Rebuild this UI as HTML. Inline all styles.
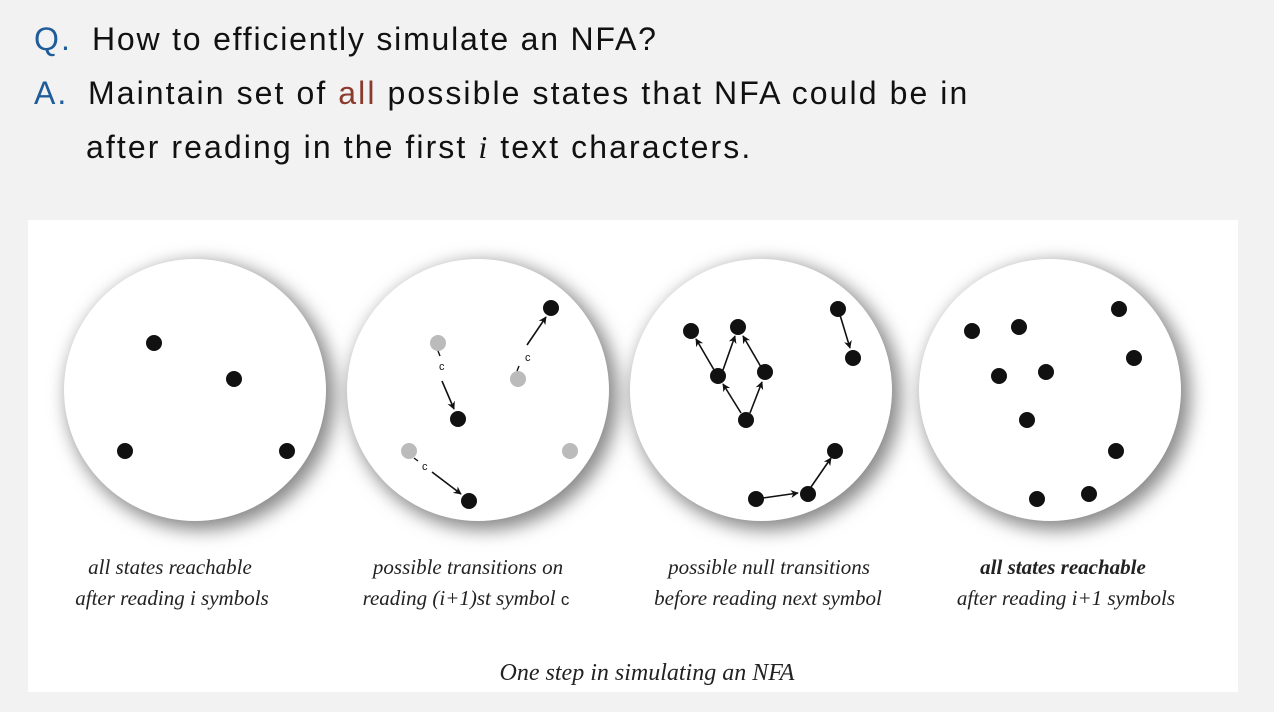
<!DOCTYPE html>
<html><head><style>
body{margin:0;width:1274px;height:712px;background:#f2f2f2;overflow:hidden;position:relative;font-family:"Liberation Sans",sans-serif}
.t{position:absolute;font-size:32px;color:#111;white-space:nowrap;letter-spacing:2.08px}
.b{color:#1f5c99}
</style></head><body>
<div class="t b" style="left:34px;top:21px">Q.</div>
<div class="t" style="left:92px;top:21px;letter-spacing:1.8px">How to efficiently simulate an NFA?</div>
<div class="t b" style="left:34px;top:75px">A.</div>
<div class="t" style="left:88px;top:75px">Maintain set of <span style="color:#8b3a2e">all</span> possible states that NFA could be in</div>
<div class="t" style="left:86px;top:129px">after reading in the first <i style="font-family:'Liberation Serif',serif">i</i> text characters.</div>
<svg style="position:absolute;left:0;top:0" width="1274" height="712">
<defs>
<filter id="bl" x="-30%" y="-30%" width="160%" height="160%"><feGaussianBlur stdDeviation="9"/></filter>
<marker id="a" viewBox="0 0 10 10" refX="9" refY="5" markerWidth="5" markerHeight="5" orient="auto"><path d="M0,0L10,5L0,10L3,5z" fill="#111"/></marker>
</defs>
<rect x="28" y="220" width="1210" height="472" fill="#fff"/>
<g fill="#888" filter="url(#bl)">
<circle cx="201" cy="396" r="134"/><circle cx="484" cy="396" r="134"/><circle cx="767" cy="396" r="134"/><circle cx="1056" cy="396" r="134"/>
</g>
<g fill="#fff">
<circle cx="195" cy="390" r="131"/><circle cx="478" cy="390" r="131"/><circle cx="761" cy="390" r="131"/><circle cx="1050" cy="390" r="131"/>
</g>
<g fill="#111">
<circle cx="154" cy="343" r="8"/><circle cx="234" cy="379" r="8"/><circle cx="125" cy="451" r="8"/><circle cx="287" cy="451" r="8"/>
</g>
<g fill="#bbb"><circle cx="438" cy="343" r="8"/><circle cx="518" cy="379" r="8"/><circle cx="409" cy="451" r="8"/><circle cx="570" cy="451" r="8"/></g>
<g fill="#111"><circle cx="458" cy="419" r="8"/><circle cx="551" cy="308" r="8"/><circle cx="469" cy="501" r="8"/></g>
<g stroke="#111" stroke-width="1.6" fill="none" marker-end="url(#a)">
<line x1="442" y1="381" x2="454" y2="409"/><line x1="527" y1="345" x2="546" y2="317"/><line x1="432" y1="472" x2="461" y2="494"/>
<line x1="717" y1="375" x2="696" y2="339"/><line x1="723" y1="370" x2="735" y2="336"/><line x1="761" y1="367" x2="743" y2="336"/>
<line x1="741" y1="413" x2="723" y2="384"/><line x1="750" y1="413" x2="762" y2="382"/><line x1="840" y1="315" x2="850" y2="348"/>
<line x1="763" y1="498" x2="798" y2="493"/><line x1="811" y1="487" x2="831" y2="458"/>
</g>
<g stroke="#111" stroke-width="1.4"><line x1="438" y1="351" x2="440" y2="356"/><line x1="517" y1="371" x2="519" y2="366"/><line x1="414" y1="458" x2="418" y2="461"/></g>
<g font-family="Liberation Sans" font-size="11" fill="#111"><text x="439" y="370">c</text><text x="525" y="361">c</text><text x="422" y="470">c</text></g>
<g fill="#111">
<circle cx="691" cy="331" r="8"/><circle cx="738" cy="327" r="8"/><circle cx="718" cy="376" r="8"/><circle cx="765" cy="372" r="8"/><circle cx="746" cy="420" r="8"/><circle cx="838" cy="309" r="8"/><circle cx="853" cy="358" r="8"/><circle cx="835" cy="451" r="8"/><circle cx="808" cy="494" r="8"/><circle cx="756" cy="499" r="8"/>
<circle cx="972" cy="331" r="8"/><circle cx="1019" cy="327" r="8"/><circle cx="999" cy="376" r="8"/><circle cx="1046" cy="372" r="8"/><circle cx="1027" cy="420" r="8"/><circle cx="1119" cy="309" r="8"/><circle cx="1134" cy="358" r="8"/><circle cx="1116" cy="451" r="8"/><circle cx="1089" cy="494" r="8"/><circle cx="1037" cy="499" r="8"/>
</g>
<g font-family="Liberation Serif" font-style="italic" font-size="21" fill="#222" text-anchor="middle">
<text x="170" y="574">all states reachable</text><text x="172" y="605">after reading i symbols</text>
<text x="468" y="574">possible transitions on</text><text x="466" y="605">reading (i+1)st symbol <tspan font-style="normal" font-family="Liberation Sans" font-size="17">c</tspan></text>
<text x="769" y="574">possible null transitions</text><text x="768" y="605">before reading next symbol</text>
<text x="1063" y="574" font-weight="bold">all states reachable</text><text x="1066" y="605">after reading i+1 symbols</text>
<text x="647" y="680" font-size="24">One step in simulating an NFA</text>
</g>
</svg>
</body></html>
